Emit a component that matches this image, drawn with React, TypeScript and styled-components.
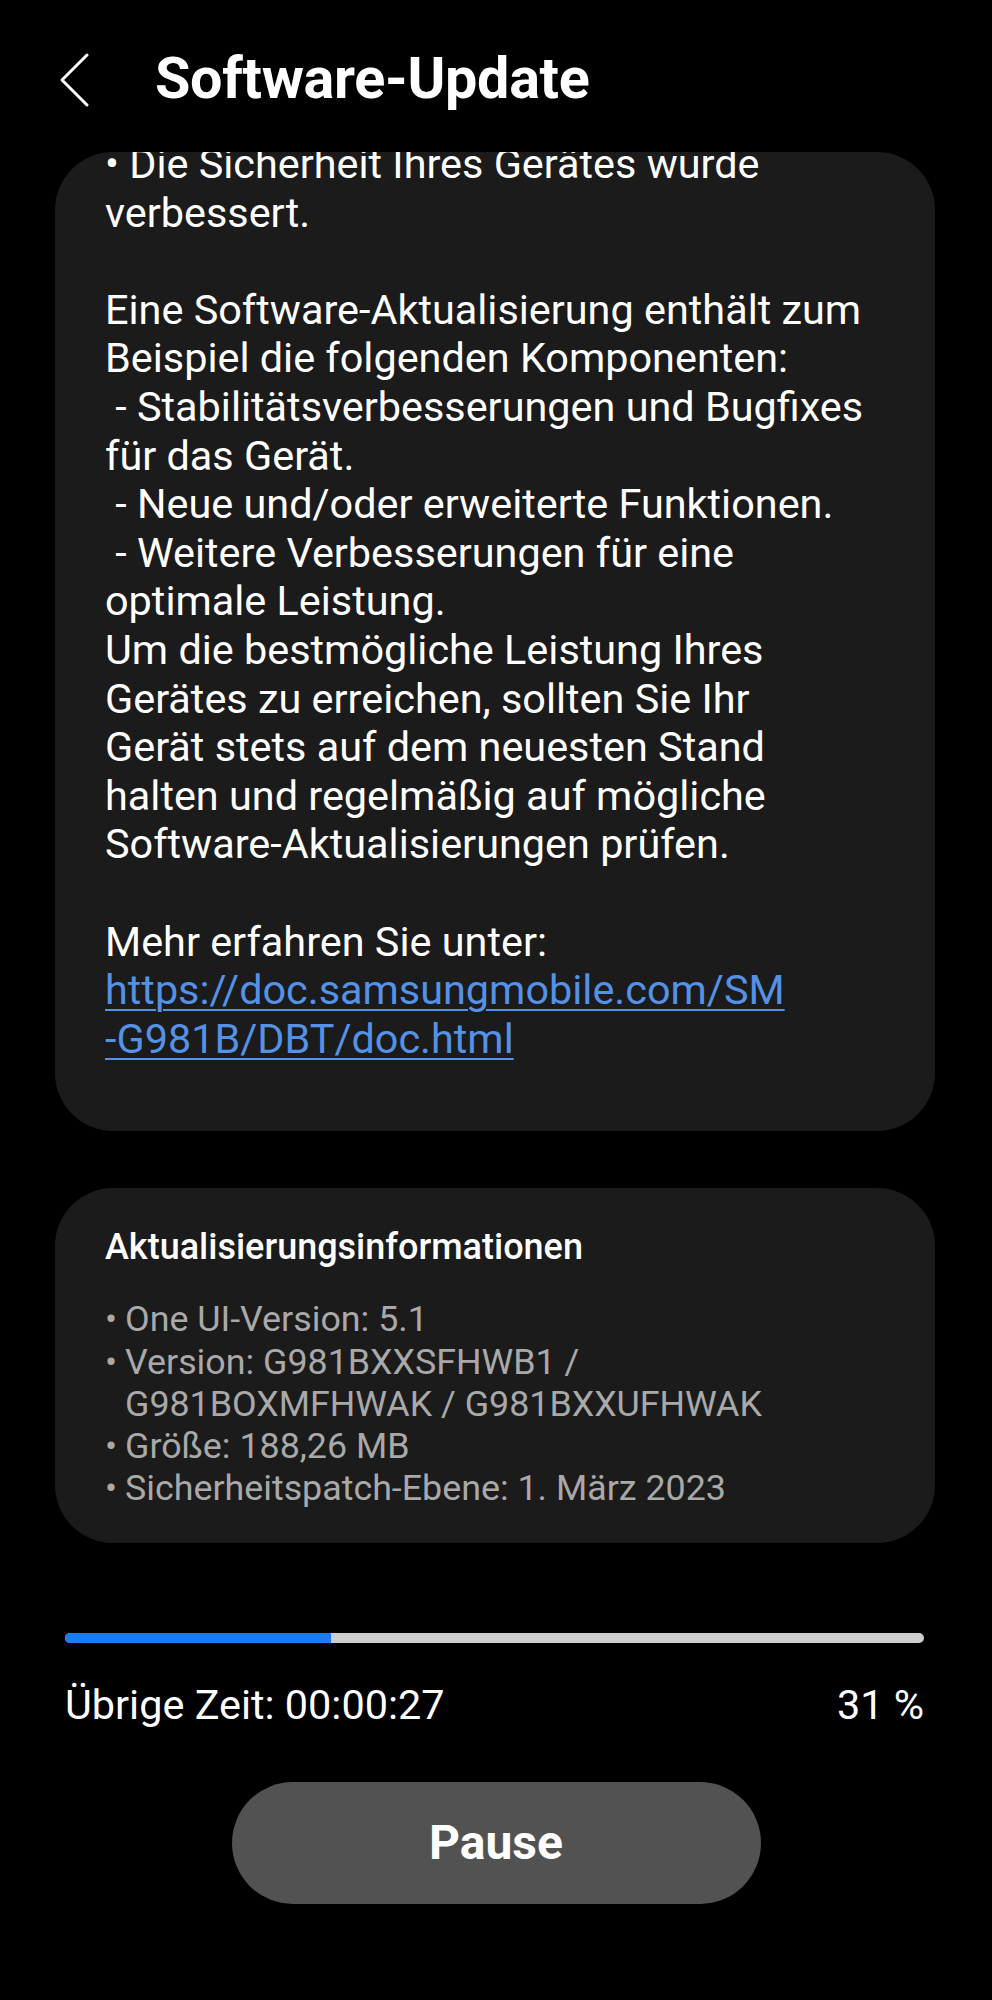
import React from "react";
import styled, { createGlobalStyle } from "styled-components";

const GlobalStyle = createGlobalStyle`
  html, body {
    margin: 0;
    padding: 0;
    background: #000;
  }
  body {
    font-family: Roboto, "Noto Sans", "Liberation Sans", sans-serif;
    color: #fff;
    -webkit-font-smoothing: antialiased;
  }
`;

const Screen = styled.div`
  width: 992px;
  min-height: 2000px;
  background: #000;
  display: flex;
  flex-direction: column;
`;

const Header = styled.header`
  height: 152px;
  box-sizing: border-box;
  padding: 47px 0 0 58px;
  display: flex;
  align-items: flex-start;
  gap: 65px;
`;

const BackButton = styled.button`
  background: none;
  border: none;
  padding: 0;
  margin-top: 5px;
  width: 32px;
  height: 56px;
  display: flex;
  cursor: pointer;
`;

const Title = styled.h1`
  margin: 0;
  font-size: 57.5px;
  line-height: 64px;
  font-weight: 700;
  color: #fff;
  letter-spacing: -0.3px;
`;

const Card = styled.section`
  margin: 0 57px 0 55px;
  background: #1b1b1b;
  border-radius: 58px;
  overflow: hidden;
`;

const NotesCard = styled(Card)`
  padding: 0 40px 68px 50px;
`;

const NotesBody = styled.div`
  margin-top: -12px;
  font-size: 41.4px;
  line-height: 48.6px;
  color: #fff;
  white-space: pre;
`;

const Line = styled.div`
  height: 48.6px;
`;

const Link = styled.a`
  color: #5592e6;
  text-decoration: underline;
  text-decoration-thickness: 2px;
  text-underline-offset: 5px;
`;

const InfoCard = styled(Card)`
  margin-top: 57px;
  padding: 38px 40px 33px 50px;
`;

const InfoTitle = styled.h2`
  margin: 0 0 30px;
  font-size: 36px;
  line-height: 42px;
  font-weight: 500;
  color: #fff;
`;

const InfoList = styled.ul`
  margin: 0;
  padding: 0;
  list-style: none;
`;

const InfoItem = styled.li`
  display: flex;
  font-size: 35.8px;
  line-height: 42.3px;
  color: #a9a9a9;
`;

const Bullet = styled.span`
  width: 20px;
  flex: none;
`;

const Progress = styled.div`
  margin: 90px 68px 0 65px;
  height: 10px;
  border-radius: 5px;
  background: #cdcdcd;
  overflow: hidden;
`;

const ProgressFill = styled.div`
  height: 100%;
  background: #1a7cf5;
`;

const StatusRow = styled.div`
  margin: 38px 68px 0 65px;
  display: flex;
  justify-content: space-between;
  font-size: 41.4px;
  line-height: 48px;
  color: #fff;
`;

const PauseButton = styled.button`
  align-self: center;
  margin-top: 53px;
  width: 529px;
  height: 122px;
  border: none;
  border-radius: 61px;
  background: #525252;
  color: #fff;
  font-family: Roboto, "Noto Sans", sans-serif;
  font-size: 48px;
  font-weight: 700;
  cursor: pointer;
`;

const noteLines: string[] = [
  "• Die Sicherheit Ihres Gerätes wurde",
  "verbessert.",
  "",
  "Eine Software-Aktualisierung enthält zum",
  "Beispiel die folgenden Komponenten:",
  " - Stabilitätsverbesserungen und Bugfixes",
  "für das Gerät.",
  " - Neue und/oder erweiterte Funktionen.",
  " - Weitere Verbesserungen für eine",
  "optimale Leistung.",
  "Um die bestmögliche Leistung Ihres",
  "Gerätes zu erreichen, sollten Sie Ihr",
  "Gerät stets auf dem neuesten Stand",
  "halten und regelmäßig auf mögliche",
  "Software-Aktualisierungen prüfen.",
  "",
  "Mehr erfahren Sie unter:",
];

const infoItems: string[][] = [
  ["One UI-Version: 5.1"],
  ["Version: G981BXXSFHWB1 /", "G981BOXMFHWAK / G981BXXUFHWAK"],
  ["Größe: 188,26 MB"],
  ["Sicherheitspatch-Ebene: 1. März 2023"],
];

export default function App() {
  const percent = 31;
  return (
    <>
      <GlobalStyle />
      <Screen>
        <Header>
          <BackButton aria-label="Zurück">
            <svg width="32" height="56" viewBox="0 0 32 56" fill="none">
              <polyline
                points="29,3 4,28 29,53"
                stroke="#fff"
                strokeWidth="3"
                strokeLinecap="round"
                strokeLinejoin="round"
              />
            </svg>
          </BackButton>
          <Title>Software-Update</Title>
        </Header>

        <NotesCard>
          <NotesBody>
            {noteLines.map((l, i) => (
              <Line key={i}>{l}</Line>
            ))}
            <Line>
              <Link href="#">https://doc.samsungmobile.com/SM</Link>
            </Line>
            <Line>
              <Link href="#">-G981B/DBT/doc.html</Link>
            </Line>
          </NotesBody>
        </NotesCard>

        <InfoCard>
          <InfoTitle>Aktualisierungsinformationen</InfoTitle>
          <InfoList>
            {infoItems.map((item, i) => (
              <InfoItem key={i}>
                <Bullet>•</Bullet>
                <div>
                  {item.map((t, j) => (
                    <div key={j}>{t}</div>
                  ))}
                </div>
              </InfoItem>
            ))}
          </InfoList>
        </InfoCard>

        <Progress>
          <ProgressFill style={{ width: `${percent}%` }} />
        </Progress>

        <StatusRow>
          <span>Übrige Zeit: 00:00:27</span>
          <span>{percent} %</span>
        </StatusRow>

        <PauseButton>Pause</PauseButton>
      </Screen>
    </>
  );
}
